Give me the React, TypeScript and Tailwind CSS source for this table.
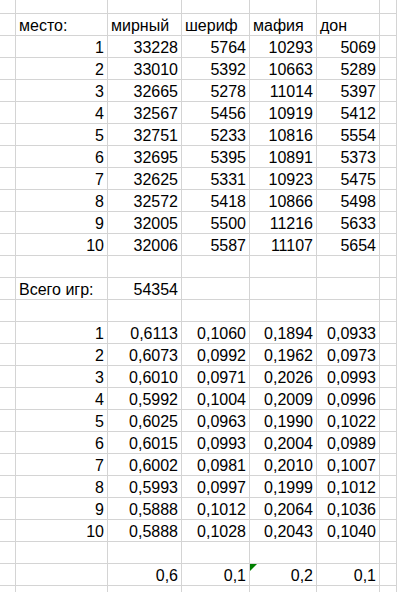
import React from "react";

type Cell = { v?: string; left?: boolean; flag?: boolean };

const counts = [
  ["1", "33228", "5764", "10293", "5069"],
  ["2", "33010", "5392", "10663", "5289"],
  ["3", "32665", "5278", "11014", "5397"],
  ["4", "32567", "5456", "10919", "5412"],
  ["5", "32751", "5233", "10816", "5554"],
  ["6", "32695", "5395", "10891", "5373"],
  ["7", "32625", "5331", "10923", "5475"],
  ["8", "32572", "5418", "10866", "5498"],
  ["9", "32005", "5500", "11216", "5633"],
  ["10", "32006", "5587", "11107", "5654"],
];

const shares = [
  ["1", "0,6113", "0,1060", "0,1894", "0,0933"],
  ["2", "0,6073", "0,0992", "0,1962", "0,0973"],
  ["3", "0,6010", "0,0971", "0,2026", "0,0993"],
  ["4", "0,5992", "0,1004", "0,2009", "0,0996"],
  ["5", "0,6025", "0,0963", "0,1990", "0,1022"],
  ["6", "0,6015", "0,0993", "0,2004", "0,0989"],
  ["7", "0,6002", "0,0981", "0,2010", "0,1007"],
  ["8", "0,5993", "0,0997", "0,1999", "0,1012"],
  ["9", "0,5888", "0,1012", "0,2064", "0,1036"],
  ["10", "0,5888", "0,1028", "0,2043", "0,1040"],
];

const num = (r: string[]): Cell[] => r.map((v) => ({ v }));
const empty: Cell[] = [];

const rows: Cell[][] = [
  [
    { v: "место:", left: true },
    { v: "мирный", left: true },
    { v: "шериф", left: true },
    { v: "мафия", left: true },
    { v: "дон", left: true },
  ],
  ...counts.map(num),
  empty,
  [{ v: "Всего игр:", left: true }, { v: "54354" }],
  empty,
  ...shares.map(num),
  empty,
  [{}, { v: "0,6" }, { v: "0,1" }, { v: "0,2", flag: true }, { v: "0,1" }],
  empty,
];

const SheetCell = ({ cell, first }: { cell?: Cell; first?: boolean }) => (
  <div
    className={`relative border-r border-b border-[#d4d4d4] overflow-visible flex items-end ${
      first ? "h-[14px]" : "h-[22px]"
    } ${cell?.left ? "justify-start pl-[3px]" : "justify-end pr-[3px]"}`}
  >
    {cell?.flag && (
      <span className="absolute left-0 top-0 w-0 h-0 border-t-[7px] border-r-[7px] border-t-[#008000] border-r-transparent" />
    )}
    {cell?.v && (
      <span className="leading-[18px] whitespace-nowrap">{cell.v}</span>
    )}
  </div>
);

export default function App() {
  return (
    <div
      className="w-[397px] h-[592px] overflow-hidden bg-white text-black text-[16px]"
      style={{ fontFamily: '"Liberation Sans", Arial, sans-serif' }}
    >
      <div className="grid grid-cols-[16px_92px_74px_68px_67px_63px_1fr]">
        {Array.from({ length: 7 }, (_, c) => (
          <SheetCell key={`h${c}`} first />
        ))}
        {rows.map((r, i) =>
          Array.from({ length: 7 }, (_, c) => (
            <SheetCell
              key={`${i}-${c}`}
              cell={c >= 1 && c <= 5 ? r[c - 1] : undefined}
            />
          ))
        )}
      </div>
    </div>
  );
}
